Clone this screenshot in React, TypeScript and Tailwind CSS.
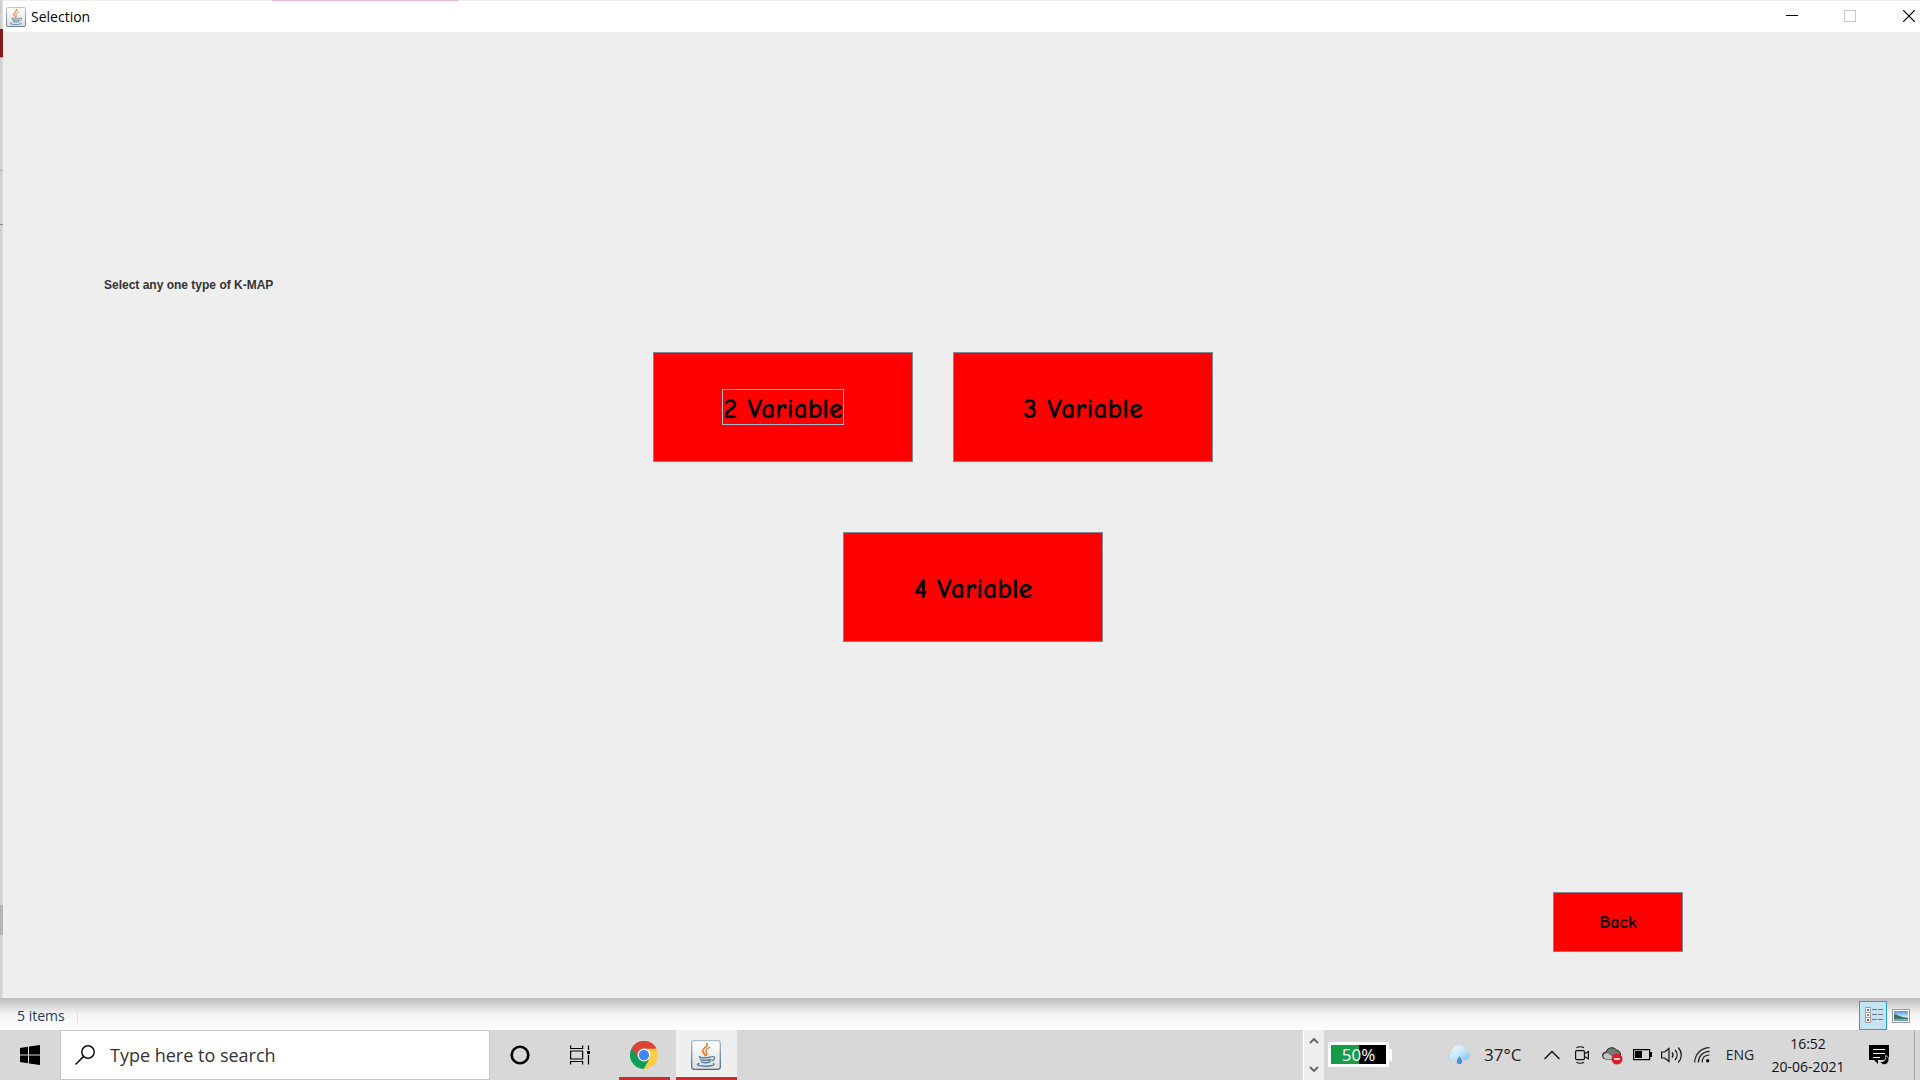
import type { ReactNode } from "react";

function JavaIcon({ size }: { size: number }) {
  return (
    <svg width={size} height={size} viewBox="0 0 30 30" aria-hidden="true">
      <defs>
        <linearGradient id="javaFace" x1="0" y1="0" x2="0" y2="1">
          <stop offset="0" stopColor="#ffffff" />
          <stop offset="1" stopColor="#dcdfe2" />
        </linearGradient>
        <linearGradient id="javaEdge" x1="0" y1="0" x2="0" y2="1">
          <stop offset="0" stopColor="#a9bccb" />
          <stop offset="1" stopColor="#4b6880" />
        </linearGradient>
      </defs>
      <rect x="0.7" y="0.7" width="28.6" height="28.6" rx="2.5" fill="url(#javaFace)" stroke="url(#javaEdge)" strokeWidth="1.3" />
      <g fill="none" strokeLinecap="round">
        <path d="M16 3.5c1.6 3-4.6 4.6-4.4 7.400 .1 2 2.300 2.800 2.600 4.600" stroke="#e8812e" strokeWidth="1.7" />
        <path d="M18.600 7.400c-2 1-4 2.200-3.600 4 .3 1.300 1.400 2 .4 3.800" stroke="#e8812e" strokeWidth="1.4" />
        <path d="M9 16.600c-2 .8 1 1.200 5 1.200 3 0 5-.4 6-.9" stroke="#5a7f9d" strokeWidth="1.4" />
        <path d="M9.500 19.200c0 1.400 8.500 1.400 10.300.3M10.500 21.800c.5 1.200 6.500 1.200 8.500.2" stroke="#5a7f9d" strokeWidth="1.500" />
        <path d="M21 16.800c3-1 4 2.200-.2 4" stroke="#5a7f9d" strokeWidth="1.300" />
        <path d="M8 23.500c-3.500 1-1 2.700 6 2.700s10.500-1.400 8.500-2.700" stroke="#5a7f9d" strokeWidth="1.400" />
      </g>
    </svg>
  );
}

function TitleBar() {
  return (
    <header className="flex h-8 items-center justify-between border-t border-[#eeeeee] bg-white">
      <div className="flex items-center gap-[5px] pl-[3px]">
        <JavaIcon size={20} />
        <h1 className="text-sm text-black">Selection</h1>
      </div>
      <div className="flex h-full pb-px">
        <button aria-label="Minimize" className="flex w-[58px] items-center justify-center">
          <svg width="12" height="12" viewBox="0 0 12 12"><path d="M0 5.500h12" stroke="#000" /></svg>
        </button>
        <button aria-label="Maximize" disabled className="flex w-[58px] items-center justify-center">
          <svg width="12" height="12" viewBox="0 0 12 12"><rect x="0.5" y="0.5" width="11" height="11" fill="none" stroke="#c8c8c8" /></svg>
        </button>
        <button aria-label="Close" className="flex w-[41px] items-center justify-end pr-[5px]">
          <svg width="12" height="12" viewBox="0 0 12 12"><path d="M0 0l12 12M12 0L0 12" stroke="#000" strokeWidth="1.200" /></svg>
        </button>
      </div>
    </header>
  );
}

function VariableButton({ label, focused = false }: { label: string; focused?: boolean }) {
  return (
    <button className="flex h-[110px] w-[260px] items-center justify-center border border-[#7a8a99] bg-[#ff0000] font-['Comic_Sans_MS','Comic_Neue',cursive] text-[28px] leading-8 font-bold text-black">
      <span className={focused ? "flex h-9 items-center border border-[#a3b8cc] pt-1" : "flex h-9 items-center border border-transparent pt-1"}>{label}</span>
    </button>
  );
}

function Selection() {
  return (
    <main className="flex grow flex-col bg-[#eeeeee] pb-[46px]">
      <p className="mt-[245px] ml-[101px] font-['Liberation_Sans',Arial,sans-serif] text-xs leading-4 font-bold text-[#333333]">
        Select any one type of K-MAP
      </p>
      <div className="mt-[59px] ml-[650px] flex gap-10">
        <VariableButton label="2 Variable" focused />
        <VariableButton label="3 Variable" />
      </div>
      <div className="mt-[70px] ml-[840px] flex">
        <VariableButton label="4 Variable" />
      </div>
      <button className="mt-auto mr-[237px] h-[60px] w-[130px] self-end border border-[#7a8a99] bg-[#ff0000] pt-0.5 font-['Comic_Sans_MS','Comic_Neue',cursive] text-lg font-bold text-black">
        Back
      </button>
    </main>
  );
}

function LeftEdge() {
  return (
    <div className="flex w-[3px] flex-col bg-linear-to-r from-[#cccccc] to-[#dedede]">
      <div className="mt-[29px] h-7 bg-[#8b1a1e]" />
      <div className="h-px bg-[#e58aa8]" />
      <div className="mt-[112px] h-px bg-[#aaaaaa]" />
      <div className="mt-[53px] h-px bg-[#888888]" />
      <div className="mt-auto mb-[63px] h-[30px] bg-[#b5b5b5]" />
    </div>
  );
}

function StatusBar() {
  return (
    <div className="flex h-8 items-end justify-between bg-linear-to-b from-[#bcbcbc] via-[#f4f4f4] via-50% to-white">
      <div className="flex h-7 items-center">
        <span className="w-[78px] border-r border-[#e4e4e4] pl-[17px] text-sm leading-4 text-[#1e395b]">5 items</span>
      </div>
      <div className="flex h-[29px] items-center gap-[5px] pr-2.5">
        <button aria-label="Details view" className="flex h-[29px] w-7 items-center justify-center border border-[#26a0da] bg-[#c6e3f1] pl-0.5">
          <svg width="18" height="17" viewBox="0 0 18 17">
            <path d="M.5.5h5v15h-5zM.5 5.500h5M.5 10.500h5" fill="#fff" stroke="#a0a0a0" />
            <path d="M2 2h2v2H2z" fill="#2f78c4" /><path d="M2 7h2v2H2z" fill="#a08a28" /><path d="M2 12h2v2H2z" fill="#d03820" />
            <path d="M7 2.500h5M13 2.500h5M7 7.500h5M13 7.500h5M7 12.500h5M13 12.500h5" stroke="#777" />
          </svg>
        </button>
        <button aria-label="Thumbnail view">
          <svg width="18" height="14" viewBox="0 0 18 14">
            <defs><linearGradient id="sky" x1="0" y1="0" x2="0" y2="1"><stop offset="0" stopColor="#4a94ec" /><stop offset="0.600" stopColor="#d4e9fa" /><stop offset="1" stopColor="#4f91c5" /></linearGradient></defs>
            <rect x="0.5" y="0.5" width="17" height="13" fill="#fff" stroke="#999" />
            <rect x="2" y="2" width="14" height="10" fill="url(#sky)" />
            <path d="M2 5c3 0 5 3 14 4v1H2z" fill="#3f7062" />
          </svg>
        </button>
      </div>
    </div>
  );
}

function TrayButton({ label, children }: { label: string; children: ReactNode }) {
  return <button aria-label={label} className="flex w-[30px] items-center justify-center">{children}</button>;
}

function Taskbar() {
  return (
    <footer className="flex h-[50px] items-stretch bg-[#d8d8d8]">
      <button aria-label="Start" className="flex w-[60px] items-center justify-center">
        <svg width="20" height="20" viewBox="0 0 20 20"><path d="M0 3l8-1.200V9.500H0zM9 1.600L20 0v9.500H9zM0 10.500h8v7.700L0 17zM9 10.500h11V20L9 18.400z" /></svg>
      </button>
      <label className="flex w-[430px] items-center gap-[15px] border border-[#c6c6c6] bg-white pl-3.5">
        <svg width="20" height="20" viewBox="0 0 20 20" fill="none" stroke="#111" strokeWidth="1.500"><circle cx="13" cy="7" r="6.200" /><path d="M8.600 11.400L.5 19.500" /></svg>
        <input aria-label="Search" placeholder="Type here to search" className="grow bg-transparent text-lg text-black outline-none placeholder:text-[#333333]" />
      </label>
      <button aria-label="Cortana" className="flex w-[60px] items-center justify-center">
        <svg width="20" height="20" viewBox="0 0 20 20"><circle cx="10" cy="10" r="8.300" fill="none" stroke="#000" strokeWidth="2.600" /></svg>
      </button>
      <button aria-label="Task view" className="flex w-[60px] items-center justify-center">
        <svg width="20" height="20" viewBox="0 0 20 20" fill="none" stroke="#000" strokeWidth="1.200"><path d="M.6.5v3h12v-3M.6 19.500v-3h12v3M.6 6h12v8H.6zM18.500.5v4.500M18.500 10v9.500" /><path d="M17 6h3v3h-3z" fill="#000" stroke="none" /></svg>
      </button>
      <button aria-label="Google Chrome" className="ml-[9px] flex w-[51px] items-center justify-center border-b-[3px] border-[#cc2b2b] pt-0.5 pr-0.5">
        <svg width="28" height="28" viewBox="0 0 48 48">
          <path d="M24 24L3.200 12A24 24 0 0 1 44.800 12z" fill="#db4437" />
          <path d="M24 24L3.200 12A24 24 0 0 0 24 48L34.400 30z" fill="#0f9d58" />
          <path d="M24 13H45.300A24 24 0 0 1 24 48L34 29z" fill="#ffcd40" />
          <path d="M24 13h21.300A24 24 0 0 0 3.200 12l11.300 17.500z" fill="#db4437" />
          <circle cx="24" cy="24" r="11" fill="#fff" /><circle cx="24" cy="24" r="8.800" fill="#4285f4" />
        </svg>
      </button>
      <button aria-label="Selection window" className="ml-1.5 flex w-[61px] items-center justify-center border-b-[3px] border-[#cc2b2b] bg-[#efefef] pt-0.5 pr-px">
        <JavaIcon size={30} />
      </button>

      <div className="ml-auto flex w-[21px] flex-col items-center justify-between border-l border-white bg-[#eeeeee] py-[7px]">
        <button aria-label="Scroll up"><svg width="10" height="7" viewBox="0 0 10 7" className="block"><path d="M1 6l4-4 4 4" fill="none" stroke="#606060" strokeWidth="1.800" /></svg></button>
        <button aria-label="Scroll down"><svg width="10" height="7" viewBox="0 0 10 7" className="block"><path d="M1 1l4 4 4-4" fill="none" stroke="#606060" strokeWidth="1.800" /></svg></button>
      </div>
      <div className="ml-1 flex w-16 items-center pb-px">
        <div className="flex h-[25px] w-[61px] items-center justify-center border-[3px] border-white bg-linear-to-r from-[#169b48] from-50% to-black to-50% text-[17px] leading-5 text-white">50%</div>
        <div className="h-3 w-[3px] bg-white" />
      </div>
      <button className="ml-[55px] flex w-[90px] items-center gap-3 text-[17px] text-[#222222]">
        <svg width="25" height="20" viewBox="0 0 25 20" className="shrink-0">
          <defs>
            <linearGradient id="cloud" x1="0" y1="0" x2="1" y2="1"><stop offset="0" stopColor="#f6fcff" /><stop offset="0.500" stopColor="#cbe8fb" /><stop offset="1" stopColor="#7fbcf0" /></linearGradient>
          </defs>
          <path d="M5 15a5 5 0 0 1 0-9 7 7 0 0 1 13-2 5.700 5.700 0 0 1 1 11z" fill="url(#cloud)" />
          <path d="M2 14a4 4 0 0 1 4-6" fill="none" stroke="#a7d4f5" />
          <path d="M12.500 11c1.500 2.500 2.700 4 2.700 5.600a2.700 2.700 0 0 1-5.400 0c0-1.600 1.200-3.100 2.700-5.600z" fill="#3e94e2" />
        </svg>
        37°C
      </button>
      <TrayButton label="Show hidden icons"><svg width="16" height="10" viewBox="0 0 16 10"><path d="M.5 9L8 1.500 15.500 9" fill="none" stroke="#111" strokeWidth="1.400" /></svg></TrayButton>
      <TrayButton label="Meet now">
        <svg width="16" height="18" viewBox="0 0 16 18" fill="none" stroke="#111" strokeWidth="1.200"><rect x="1.600" y="4.600" width="8.800" height="9" rx="1" /><path d="M10.400 7.700l4-2.200v7.200l-4-2.200M2.500 1.800C4.500.5 8 .5 10 1.800M2.500 16.200c2 1.300 5.500 1.300 7.500 0" /></svg>
      </TrayButton>
      <TrayButton label="OneDrive">
        <svg width="21" height="19" viewBox="0 0 21 19"><path d="M4 13a3.500 3.500 0 0 1 0-7A6 6 0 0 1 14.500 4 4.500 4.500 0 0 1 18.500 9L12 13z" fill="#777" stroke="#222" /><path d="M2 12c-2-4 3-6 6-3l6 4H4z" fill="#c4c4c4" /><circle cx="15" cy="13" r="5.500" fill="#d91f2b" /><path d="M12 13h6" stroke="#fff" strokeWidth="1.500" /></svg>
      </TrayButton>
      <TrayButton label="Battery"><svg width="19" height="12" viewBox="0 0 19 12"><path d="M.6.6h16v10H.6z" fill="none" stroke="#000" strokeWidth="1.200" /><path d="M2 2h7v7H2zM17 3h2v5h-2z" /></svg></TrayButton>
      <TrayButton label="Volume">
        <svg width="22" height="18" viewBox="0 0 22 18" fill="none" stroke="#111" strokeWidth="1.200"><path d="M.6 6h3L8 2.500v13L3.600 12h-3zM11 6.500c1.300 1.500 1.300 3.500 0 5M14 4c2.800 3 2.800 7 0 10M17.300 1.500c4 4.500 4 10.500 0 15" /></svg>
      </TrayButton>
      <TrayButton label="Wi-Fi">
        <svg width="16" height="16" viewBox="0 0 16 16" fill="none" stroke="#222" strokeWidth="1.200"><path d="M.7 15.500C1 7 7 1 15.500.7M4.300 15.500C4.500 9 9 4.500 15.500 4.300M8 15.500C8.100 11 11 8.100 15.500 8" /><circle cx="13.700" cy="13.700" r="1.700" fill="#000" stroke="none" /></svg>
      </TrayButton>
      <button className="w-[46px] text-sm text-[#222222]">ENG</button>
      <button className="flex w-[90px] flex-col items-center gap-[3px] pt-1 text-sm leading-5 text-[#111111]">
        <span>16:52</span>
        <span>20-06-2021</span>
      </button>
      <button aria-label="Notifications" className="flex w-[52px] items-center justify-center">
        <svg width="20" height="20" viewBox="0 0 20 20"><path d="M0 0h20v15H9v4l-4-4H0z" /><path d="M4 4.500h12M4 8.500h12M4 12.500h7" stroke="#fff" strokeWidth="1.200" /><path d="M16.500 10.500a4.500 4.500 0 0 1-5.500 6 4.600 4.600 0 1 0 5.500-6z" fill="#000" stroke="#d8d8d8" strokeWidth="0.900" /></svg>
      </button>
      <button aria-label="Show desktop" className="ml-[9px] w-1.5 border-l border-[#a8a8a8]" />
    </footer>
  );
}

export default function App() {
  return (
    <div className="relative flex min-h-screen flex-col font-['Segoe_UI','Open_Sans','Noto_Sans',sans-serif]">
      <div className="absolute top-0 left-[272px] h-px w-[186px] bg-[#f0b8cd]" />
      <div className="flex grow">
        <LeftEdge />
        <div className="flex grow flex-col">
          <TitleBar />
          <Selection />
        </div>
      </div>
      <StatusBar />
      <Taskbar />
    </div>
  );
}
